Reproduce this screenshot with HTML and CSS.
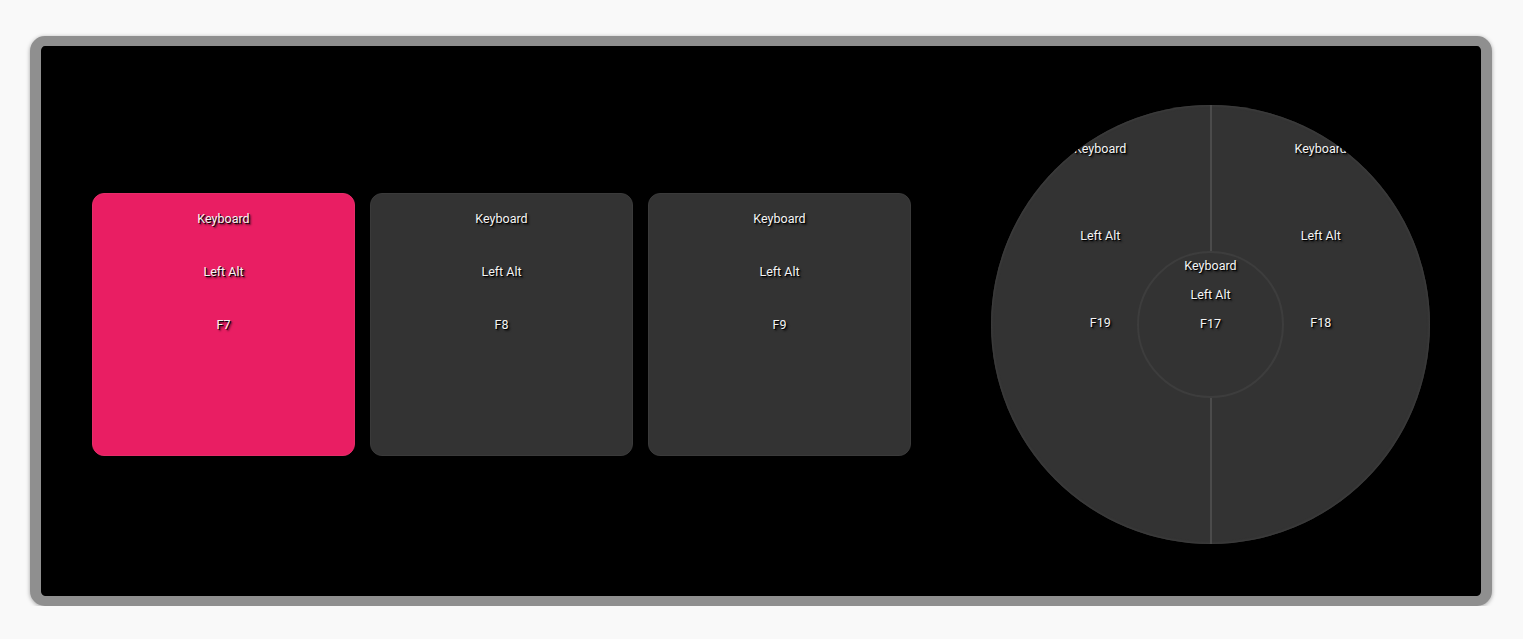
FILE: index.html
```html
<!DOCTYPE html>
<html>
<head>
<meta charset="utf-8">
<link rel="stylesheet" href="styles.css">
</head>
<body>
<div class="frame">
  <div class="screen">
    <div class="keys">
      <div class="key key-active">
        <span class="lbl">Keyboard</span>
        <span class="lbl">Left Alt</span>
        <span class="lbl">F7</span>
      </div>
      <div class="key">
        <span class="lbl">Keyboard</span>
        <span class="lbl">Left Alt</span>
        <span class="lbl">F8</span>
      </div>
      <div class="key">
        <span class="lbl">Keyboard</span>
        <span class="lbl">Left Alt</span>
        <span class="lbl">F9</span>
      </div>
    </div>
    <div class="dial">
      <div class="half half-left">
        <span class="lbl">Keyboard</span>
        <span class="lbl">Left Alt</span>
        <span class="lbl">F19</span>
      </div>
      <div class="half half-right">
        <span class="lbl">Keyboard</span>
        <span class="lbl">Left Alt</span>
        <span class="lbl">F18</span>
      </div>
      <div class="hub">
        <span class="lbl">Keyboard</span>
        <span class="lbl">Left Alt</span>
        <span class="lbl">F17</span>
      </div>
    </div>
  </div>
</div>
</body>
</html>
```

FILE: styles.css
```css
html, body {
  margin: 0;
  padding: 0;
  background: #f9f9f9;
  font-family: Roboto, "Liberation Sans", sans-serif;
}

.frame {
  margin: 36px 31px 0 30px;
  height: 570px;
  box-sizing: border-box;
  border-style: solid;
  border-color: #8f8f8f;
  border-width: 10px 11px 10px 11px;
  border-radius: 15px;
  background: #000;
  box-shadow: 0 1px 4px rgba(0, 0, 0, 0.35);
}

.screen {
  height: 100%;
  box-sizing: border-box;
  background: #000;
  border-radius: 7px;
  padding: 6px 51px 0 51px;
  display: flex;
  align-items: center;
  justify-content: space-between;
}

.keys {
  display: flex;
  gap: 15px;
}

.lbl {
  display: block;
  height: 16px;
  line-height: 16px;
  font-size: 12.5px;
  color: #f4f4f4;
  text-align: center;
  white-space: nowrap;
  text-shadow: 1px 1px 0 rgba(0, 0, 0, 0.9), 2px 2px 2px rgba(0, 0, 0, 0.7);
}

.key {
  width: 263px;
  height: 263px;
  box-sizing: border-box;
  border-radius: 12px;
  background: #333333;
  border: 1px solid #3a3a3a;
  padding-top: 17px;
  display: flex;
  flex-direction: column;
  gap: 37px;
}

.key-active {
  background: #e91e63;
  border-color: #e52d69;
}

.dial {
  position: relative;
  width: 439px;
  height: 439px;
  border-radius: 50%;
  overflow: hidden;
  display: flex;
  background: #333333;
  box-shadow: inset 0 0 2px 1px #3e3e3e;
}

.half {
  flex: 1;
  box-sizing: border-box;
  padding-top: 36px;
  display: flex;
  flex-direction: column;
  gap: 71px;
}

.half-left {
  border-right: 1px solid #4b4b4b;
}

.half-right {
  border-left: 1px solid #4b4b4b;
}

.hub {
  position: absolute;
  left: 146px;
  top: 146px;
  width: 147px;
  height: 147px;
  box-sizing: border-box;
  border-radius: 50%;
  background: #333333;
  border: 2px solid #3d3d3d;
  padding-top: 5px;
  display: flex;
  flex-direction: column;
  gap: 13px;
}
```
